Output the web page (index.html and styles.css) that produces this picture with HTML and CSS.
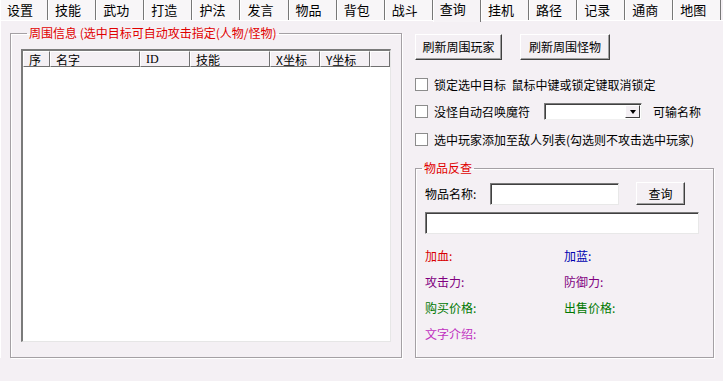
FILE: index.html
```html
<!DOCTYPE html>
<html lang="zh">
<head>
<meta charset="utf-8">
<link rel="stylesheet" href="styles.css">
</head>
<body>
<div class="tabs">
  <div class="tab">设置</div>
  <div class="tab">技能</div>
  <div class="tab">武功</div>
  <div class="tab">打造</div>
  <div class="tab">护法</div>
  <div class="tab">发言</div>
  <div class="tab">物品</div>
  <div class="tab">背包</div>
  <div class="tab">战斗</div>
  <div class="tab active">查询</div>
  <div class="tab">挂机</div>
  <div class="tab">路径</div>
  <div class="tab">记录</div>
  <div class="tab">通商</div>
  <div class="tab">地图</div>
</div>
<div class="page">
  <fieldset class="group left-group">
    <legend class="legend">周围信息 (选中目标可自动攻击指定(人物/怪物)</legend>
    <div class="list">
      <div class="list-head">
        <div class="col c-seq">序</div>
        <div class="col c-name">名字</div>
        <div class="col c-id">ID</div>
        <div class="col c-skill">技能</div>
        <div class="col c-x">X坐标</div>
        <div class="col c-y">Y坐标</div>
        <div class="col c-rest"></div>
      </div>
    </div>
  </fieldset>
  <div class="right">
    <div class="btn-row">
      <div class="btn b1">刷新周围玩家</div>
      <div class="btn b2">刷新周围怪物</div>
    </div>
    <div class="cb-row r1"><span class="cb"></span><span>锁定选中目标&nbsp;&nbsp;鼠标中键或锁定键取消锁定</span></div>
    <div class="cb-row r2"><span class="cb"></span><span class="cb-label">没怪自动召唤魔符</span>
      <div class="combo"><div class="combo-btn"><span class="arrow"></span></div></div>
      <span class="hint">可输名称</span>
    </div>
    <div class="cb-row r3"><span class="cb"></span><span>选中玩家添加至敌人列表(勾选则不攻击选中玩家)</span></div>
    <fieldset class="group item-group">
      <legend class="legend legend2">物品反查</legend>
      <div class="search-row">
        <span class="name-label">物品名称:</span>
        <div class="input in1"></div>
        <div class="btn b3">查询</div>
      </div>
      <div class="input in2"></div>
      <div class="props">
        <span class="p red">加血:</span><span class="p blue">加蓝:</span>
        <span class="p purple">攻击力:</span><span class="p purple">防御力:</span>
        <span class="p green">购买价格:</span><span class="p green">出售价格:</span>
        <span class="p magenta">文字介绍:</span><span class="p"></span>
      </div>
    </fieldset>
  </div>
</div>
</body>
</html>
```
FILE: styles.css
```css
* { box-sizing: border-box; }
html, body { margin: 0; padding: 0; }
body {
  width: 723px;
  height: 381px;
  overflow: hidden;
  background: #f4f0f4;
  font-family: "SimSun", "Noto Sans CJK SC", "Liberation Sans", sans-serif;
  font-size: 12px;
  color: #000;
}
.tabs {
  display: flex;
  height: 21px;
  border-bottom: 1px solid #fff;
  background: #f4f0f4;
}
.tab {
  width: 48.1px;
  height: 20px;
  padding: 2px 0 0 6px;
  font-size: 13px;
  line-height: 16px;
  background: #f8f6f8;
  border-left: 1px solid #fff;
  border-right: 1px solid #777;
}
.tab.active {
  height: 22px;
  padding-top: 1px;
  background: #f6f3f6;
  position: relative;
  z-index: 1;
}
.page {
  display: flex;
  align-items: flex-start;
  padding: 5px 0 0 9px;
  border-left: 1px solid #fff;
}
.group {
  margin: 0;
  padding: 0;
  border: 1px solid #a4a0a4;
  box-shadow: 1px 1px 0 #fff, inset 1px 1px 0 #fff;
}
.legend {
  color: #e00000;
  margin-left: 6px;
  padding: 0 2px;
  line-height: 14px;
  font-size: 12px;
}
.left-group {
  width: 392px;
  height: 332px;
  padding: 0 0 0 10px;
}
.list {
  margin-top: 9px;
  width: 370px;
  height: 293px;
  background: #fff;
  border-style: solid;
  border-width: 2px 1px 1px 2px;
  border-color: #7a7a7a #e6e6e6 #e6e6e6 #7a7a7a;
}
.list-head {
  display: flex;
  height: 16px;
}
.col {
  height: 16px;
  line-height: 15px;
  padding-left: 5px;
  background: #f4f0f4;
  border-style: solid;
  border-width: 1px;
  border-color: #fff #707070 #707070 #fff;
  font-size: 12px;
  white-space: nowrap;
}
.c-seq { width: 27px; }
.c-name { width: 90px; }
.c-id { width: 50px; font-family: "Liberation Serif", serif; }
.c-skill { width: 80px; }
.c-x { width: 50px; }
.c-y { width: 50px; }
.c-rest { flex: 1; }
.right {
  margin-left: 13px;
  padding-top: 8px;
  display: flex;
  flex-direction: column;
}
.btn-row {
  display: flex;
  gap: 18px;
}
.btn {
  height: 26px;
  line-height: 24px;
  text-align: center;
  background: #f4f0f4;
  border: 1px solid;
  border-color: #fff #404040 #404040 #fff;
  box-shadow: inset -1px -1px 0 #a0a0a0;
}
.b1 { width: 87px; }
.b2 { width: 90px; }
.cb-row {
  display: flex;
  align-items: center;
  height: 17px;
  white-space: nowrap;
}
.r1 { margin-top: 16px; }
.r2 { margin-top: 10px; }
.r3 { margin-top: 11px; }
.cb {
  width: 13px;
  height: 13px;
  background: #fff;
  border: 1px solid #8c8c8c;
  margin-right: 6px;
  flex: none;
}
.cb-label { width: 110px; }
.combo {
  width: 98px;
  height: 17px;
  background: #fff;
  border-style: solid;
  border-width: 1px;
  border-color: #7a7a7a #f0f0f0 #f0f0f0 #7a7a7a;
  box-shadow: inset 1px 1px 0 #404040;
  display: flex;
  justify-content: flex-end;
  padding: 1px 1px 1px 2px;
}
.combo-btn {
  width: 15px;
  height: 13px;
  background: #f4f0f4;
  border: 1px solid;
  border-color: #fff #404040 #404040 #fff;
  display: flex;
  align-items: center;
  justify-content: center;
}
.arrow {
  width: 0;
  height: 0;
  border-left: 3.5px solid transparent;
  border-right: 3.5px solid transparent;
  border-top: 4px solid #000;
}
.hint { margin-left: 11px; }
.item-group {
  margin-top: 13px;
  width: 299px;
  height: 197px;
  padding: 0 0 0 9px;
}
.legend2 { margin-left: -3px; }
.search-row {
  display: flex;
  align-items: center;
  margin-top: 7px;
  height: 23px;
}
.name-label { width: 65px; }
.input {
  height: 22px;
  background: #fff;
  border-style: solid;
  border-width: 1px;
  border-color: #7a7a7a #e8e8e8 #e8e8e8 #7a7a7a;
  box-shadow: inset 1px 1px 0 #404040;
}
.in1 { width: 129px; }
.b3 { width: 49px; height: 23px; line-height: 21px; margin-left: 17px; }
.in2 { width: 274px; margin-top: 7px; }
.props {
  margin-top: 8px;
  display: grid;
  grid-template-columns: 139px 1fr;
  grid-auto-rows: 26px;
  align-items: center;
}
.red { color: #d80000; }
.blue { color: #0000b0; }
.purple { color: #800080; }
.green { color: #007800; }
.magenta { color: #c030c0; }
```
